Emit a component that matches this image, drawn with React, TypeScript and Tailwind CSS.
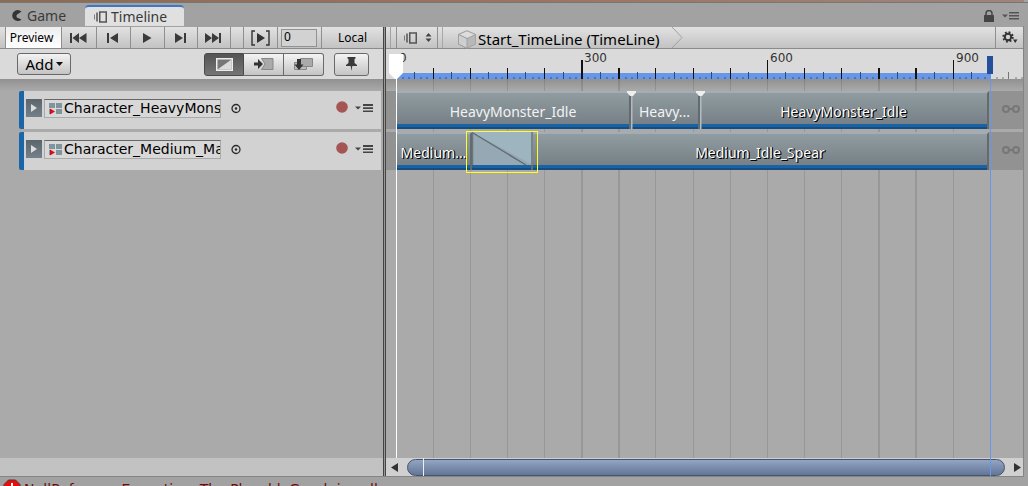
import React from "react";

const START = 10;
const VIEW = 637;
const PX_PER_FRAME = 185.7 / 300;
const END_FRAME = 960;

const pct = (px: number) => `${(px / VIEW) * 100}%`;
const at = (frame: number) => pct(START + Math.floor(frame * PX_PER_FRAME));

const bar = "bg-linear-to-b from-[#e2e2e2] to-[#c2c2c2]";
const pill =
  "flex items-center justify-center border border-[#6a6a6a] bg-linear-to-b from-[#f4f4f4] to-[#c4c4c4]";
const wideFont = "font-['DejaVu_Sans',sans-serif]";

function ToolButton({ label, className, children }: { label: string; className: string; children?: React.ReactNode }) {
  return (
    <button aria-label={label} className={`flex h-full shrink-0 items-center justify-center border-r border-[#8f8f8f] ${className}`}>
      {children}
    </button>
  );
}

function Media({ d, lines = [] }: { d: string; lines?: number[] }) {
  return (
    <svg width="20" height="12" viewBox="0 0 20 12" fill="#3a3a3a">
      <path d={d} />
      {lines.map((x) => (
        <rect key={x} x={x} y="1" width="2" height="10" />
      ))}
    </svg>
  );
}

function MenuIcon({ bold = false }: { bold?: boolean }) {
  return (
    <svg width="18" height="10" viewBox="0 0 18 10" fill={bold ? "#444" : "#555"}>
      <path d="M0 3.5h6L3 6.500z" />
      <path d={bold ? "M8 1h10v2H8zM8 4.300h10v1.700H8zM8 7.500h10v1.500H8z" : "M7 1h10v1.500H7zM7 4h10v1.500H7zM7 7h10v1.500H7z"} />
    </svg>
  );
}

function TimelineIcon() {
  return (
    <svg width="16" height="12" viewBox="0 0 16 12" fill="none" stroke="#555">
      <path d="M1.500 3.500v5" opacity=".7" />
      <path d="M4 1.500v9" strokeWidth="1.500" />
      <rect x="6.750" y="1" width="6.500" height="10" strokeWidth="1.500" />
    </svg>
  );
}

function TabBar() {
  return (
    <div className="flex h-6 shrink-0 items-end border-t border-[#777] bg-[#a2a2a2] pl-1 text-[14px] text-[#3a3a3a]">
      <button className="flex h-[21px] w-20 items-center gap-1 pl-1.5">
        <svg width="13" height="12" viewBox="0 0 13 12" fill="#333">
          <path d="M11.500 1.500A5.500 5.500 0 1 0 11.500 9.500L8 8C6 8 6 4 8 4z" />
        </svg>
        Game
      </button>
      <button className="ml-px flex h-[21px] w-[99px] items-center gap-0.5 rounded-t-sm border-t-2 border-[#3b79c8] bg-[#e0e0e0] pl-2">
        <TimelineIcon />
        Timeline
      </button>
      <div className="ml-auto flex h-5 items-center gap-2 pr-2">
        <button aria-label="Lock">
          <svg width="10" height="12" viewBox="0 0 10 12" fill="#444">
            <rect x="0" y="5" width="10" height="7" rx=".5" />
            <path d="M2 6V3.500a3 3 0 0 1 6 0V6" fill="none" stroke="#444" strokeWidth="1.500" />
          </svg>
        </button>
        <button aria-label="Window menu">
          <MenuIcon />
        </button>
      </div>
    </div>
  );
}

function Transport() {
  return (
    <div className={`flex h-[22px] shrink-0 border-b border-[#8b8b8b] ${bar}`}>
      <div className="w-1.5 border-r border-[#8f8f8f]" />
      <button className="w-14 shrink-0 border-r border-[#8f8f8f] bg-linear-to-b from-[#eee] to-white pr-1 text-[12px] text-black">Preview</button>
      <ToolButton label="Go to start" className="w-[35px]">
        <Media d="M10 1v10L3.500 6zM17.500 1v10L10 6z" lines={[1]} />
      </ToolButton>
      <ToolButton label="Previous frame" className="w-[34px]">
        <Media d="M14 1v10L6 6z" lines={[3]} />
      </ToolButton>
      <ToolButton label="Play" className="w-[34px]">
        <Media d="M5 1v10L13.500 6z" />
      </ToolButton>
      <ToolButton label="Next frame" className="w-[33px]">
        <Media d="M4 1v10L12 6z" lines={[13]} />
      </ToolButton>
      <ToolButton label="Go to end" className="w-[33px]">
        <Media d="M1 1v10L8 6zM8 1v10L15 6z" lines={[15]} />
      </ToolButton>
      <div className="w-[13px] border-r border-[#8f8f8f]" />
      <ToolButton label="Play range" className="w-[34px]">
        <svg width="20" height="16" viewBox="0 0 20 16" fill="#333">
          <path d="M6 3v10l8-5z" />
          <path d="M4 1H1v14h3M15 1h3v14h-3" fill="none" stroke="#333" strokeWidth="1.400" />
        </svg>
      </ToolButton>
      <div className="flex w-11 items-center border-r border-[#8f8f8f] pl-[3px]">
        <input aria-label="Current frame" defaultValue="0" className="h-[18px] w-9 border border-[#929292] bg-[#d2d2d2] px-0.5 pb-0.5 text-[12px] text-black outline-none" />
      </div>
      <button className="flex-1 text-[12px] text-black">Local</button>
    </div>
  );
}

function TrackTools() {
  return (
    <div className="flex h-[30px] shrink-0 items-center bg-[#dadada] pr-3.5 pl-[17px]">
      <button className={`${pill} h-[22px] w-[54px] gap-0.5 rounded-[3px] text-[15px] text-black`}>
        Add
        <svg width="7" height="4" viewBox="0 0 7 4" fill="#111">
          <path d="M0 0h7L3.500 4z" />
        </svg>
      </button>
      <div className="ml-auto flex h-[23px]">
        <button aria-label="Mix mode" className="flex w-10 items-center justify-center rounded-l-[3px] border border-[#4a4a4a] bg-linear-to-b from-[#555] to-[#757575]">
          <svg width="17" height="13" viewBox="0 0 17 13">
            <rect x=".75" y=".75" width="15.500" height="11.500" fill="#777" stroke="#eee" strokeWidth="1.500" />
            <path d="M15.500 1.500v10H1.500z" fill="#dcdcdc" />
          </svg>
        </button>
        <button aria-label="Ripple mode" className={`${pill} w-10 border-l-0`}>
          <svg width="22" height="14" viewBox="0 0 22 14">
            <path d="M8.500 1.500H20v11H8.500L12 7z" fill="#aaa" stroke="#888" />
            <path d="M1 5.500h4V2l5 5-5 5V8.500H1z" fill="#333" />
          </svg>
        </button>
        <button aria-label="Replace mode" className={`${pill} w-10 rounded-r-[3px] border-l-0`}>
          <svg width="21" height="14" viewBox="0 0 21 14">
            <path d="M1.500 5.500h12v7h-12z" fill="#bbb" stroke="#888" />
            <path d="M7.500 1.500h12v8h-12z" fill="#aaa" stroke="#888" />
            <path d="M4 2h4v5.500h2.500L6 13 1.500 7.500H4z" fill="#333" />
          </svg>
        </button>
      </div>
      <button aria-label="Pin" className={`${pill} ml-2.5 h-[23px] w-[35px] rounded-[3px]`}>
        <svg width="11" height="14" viewBox="0 0 11 14" fill="#3a3a3a">
          <path d="M1.500 0h8v1.500L8.500 2v4l2.500 2v1H6.300L5.500 14 4.700 9H0V8l2.500-2V2l-1-.5z" />
        </svg>
      </button>
    </div>
  );
}

function TrackHeader({ name }: { name: string }) {
  return (
    <div className="mr-0.5 ml-[19px] flex h-[38px] items-start rounded-l-[2px] border-l-[5px] border-[#1a66a8] bg-[#d2d2d2] pt-2 pl-0.5">
      <button aria-label="Expand track" className="flex h-[18px] w-4 items-center justify-center bg-linear-to-b from-[#5b666c] to-[#74808a]">
        <svg width="6" height="8" viewBox="0 0 6 8" fill="#ddd">
          <path d="M0 0v8l6-4z" />
        </svg>
      </button>
      <button className={`ml-0.5 flex h-[19px] w-[177px] items-center gap-0.5 overflow-hidden border border-[#aaa] border-t-[#666] bg-[#d8d8d8] pl-1 text-[14px] whitespace-nowrap text-black ${wideFont}`}>
        <svg className="shrink-0" width="13" height="13" viewBox="0 0 13 13">
          <path d="M0 1h6v5H0zM7 1h6v5H7zM7 7h6v5H7z" fill="#7f949d" />
          <path d="M0 7h2v5H0z" fill="#7f949d" />
          <path d="M1 6.500v6L6 9.500z" fill="#d80c18" />
        </svg>
        <span>{name}</span>
      </button>
      <button aria-label="Pick object" className="mt-1 ml-2.5">
        <svg width="10" height="11" viewBox="0 0 10 11">
          <circle cx="5" cy="5.500" r="4" fill="none" stroke="#2a2a2a" strokeWidth="1.300" />
          <circle cx="5" cy="5.500" r="1.200" fill="#2a2a2a" />
        </svg>
      </button>
      <button aria-label="Record" className="mt-0.5 ml-auto">
        <svg width="12" height="12" viewBox="0 0 12 12">
          <circle cx="6" cy="6" r="5.800" fill="#a55553" />
        </svg>
      </button>
      <button aria-label="Track menu" className="mt-1 mr-2 ml-[7px]">
        <MenuIcon bold />
      </button>
    </div>
  );
}

function Breadcrumbs() {
  return (
    <div className={`flex h-[22px] shrink-0 border-b border-[#8b8b8b] ${bar}`}>
      <div className="w-[5px] border-r border-[#a2a2a2]" />
      <div className="w-1.5 border-r border-[#8f8f8f]" />
      <ToolButton label="Select timeline" className="w-[41px] gap-1.5">
        <TimelineIcon />
        <svg width="7" height="9" viewBox="0 0 7 9" fill="#444">
          <path d="M.5 3.500L3.500 0l3 3.500zM.5 5.500L3.500 9l3-3.500z" />
        </svg>
      </ToolButton>
      <div className="w-[5px] border-r border-[#a8a8a8]" />
      <a href="#timeline" className="flex items-center pt-1 pl-3.5 text-[15px] text-black">
        <svg className="shrink-0" width="20" height="19" viewBox="0 0 20 19" stroke="#999" strokeWidth=".8">
          <path d="M10 .8l8.500 3.700v9.500L10 18.300 1.500 14V4.500z" fill="#b8b8b8" />
          <path d="M10 .8l8.500 3.700L10 8.500 1.500 4.500z" fill="#ddd" />
          <path d="M1.500 4.500L10 8.500v9.800L1.500 14z" fill="#cfcfcf" />
        </svg>
        <span className="ml-px whitespace-nowrap">Start_TimeLine (TimeLine)</span>
      </a>
      <svg className="ml-2.5 shrink-0" width="14" height="21" viewBox="0 0 14 21" fill="none" stroke="#a0a0a0">
        <path d="M2 0l10 10.500L2 21" />
      </svg>
      <button aria-label="Timeline settings" className="ml-auto flex w-7 items-center justify-center border-l border-[#8f8f8f]">
        <svg width="16" height="14" viewBox="0 0 16 14">
          <circle cx="6" cy="6" r="3.200" fill="none" stroke="#333" strokeWidth="2" />
          <circle cx="6" cy="6" r="4.800" fill="none" stroke="#333" strokeWidth="1.800" strokeDasharray="1.900 1.870" />
          <path d="M11 8.500h4.500L13.200 12z" fill="#333" />
        </svg>
      </button>
    </div>
  );
}

const WIDE_LINES = [300, 360, 780, 840];

function Ruler() {
  const ticks: React.ReactNode[] = [];
  for (let f = 10; f <= 1010; f += 10) {
    const past = f > END_FRAME;
    const major = f % 300 === 0;
    const large = f % 60 === 0;
    const medium = f % 30 === 0;
    const top = major ? 11 : large ? 19 : medium ? 23 : 28;
    ticks.push(
      <rect
        key={f}
        x={at(f)}
        y={top}
        width={WIDE_LINES.includes(f) || !medium ? 2 : 1}
        height={30 - top}
        fill={past ? (medium ? "#777" : "#aaa") : large ? "#111" : medium ? "#2f4a7c" : "#4a74bd"}
      />,
    );
  }
  return (
    <div className={`relative h-[30px] shrink-0 bg-[#dadada] text-[12px] text-[#333] ${wideFont}`}>
      <svg className="absolute inset-0 h-full w-full" shapeRendering="crispEdges">
        <rect x={at(0)} y="24" width={pct(594)} height="6" fill="#6797e8" />
        {ticks}
      </svg>
      {[0, 300, 600, 900].map((f) => (
        <span key={f} className="absolute top-0 pl-[3px] leading-[18px]" style={{ left: at(f) }}>
          {f}
        </span>
      ))}
    </div>
  );
}

function GridLines() {
  const lines: React.ReactNode[] = [];
  for (let f = 60; f < END_FRAME; f += 60) {
    lines.push(<rect key={f} x={at(f)} y="0" width={WIDE_LINES.includes(f) ? 2 : 1} height="100%" fill="#979797" />);
  }
  return (
    <svg className="absolute inset-0 h-full w-full" shapeRendering="crispEdges">
      {lines}
    </svg>
  );
}

type ClipData = { name: string; width: number; bright?: boolean };

function Clip({ clip }: { clip: ClipData }) {
  return (
    <div
      className="relative flex h-full shrink-0 items-center justify-center overflow-hidden border-t-2 border-r-2 border-t-[#a4adb4] border-r-[#626b70] bg-linear-to-b from-[#919ca1] to-[#727c82]"
      style={{ width: pct(clip.width) }}
    >
      <span className={`whitespace-nowrap text-[14px] text-white ${clip.bright ? "[text-shadow:1px_1px_0_#000,1px_0_0_#000]" : "opacity-90"}`}>
        {clip.name}
      </span>
      <div className="absolute inset-x-0 bottom-0 h-[5px] border-b-2 border-[#164d80] bg-[#1962a4]" />
    </div>
  );
}

function Lane({ clips }: { clips: ClipData[] }) {
  return (
    <div className="relative flex h-[38px] bg-[#929292]">
      <div className="shrink-0" style={{ width: pct(START + 1) }} />
      {clips.map((c, i) => (
        <Clip key={i} clip={c} />
      ))}
      <svg className="absolute top-[13px] right-[3px] h-2.5 w-[18px]" viewBox="0 0 18 10" fill="none" stroke="#777" strokeWidth="2">
        <circle cx="4" cy="5" r="3" />
        <circle cx="14" cy="5" r="3" />
        <path d="M7 5h4" />
      </svg>
    </div>
  );
}

function Lanes() {
  return (
    <div className="relative flex-1 overflow-hidden bg-[#aaaaaa]">
      <GridLines />
      <div className="relative h-3 bg-linear-to-b from-black/15 to-transparent" />
      <div className="relative flex flex-col gap-[3px]">
        <Lane
          clips={[
            { name: "HeavyMonster_Idle", width: 234 },
            { name: "Heavy...", width: 69 },
            { name: "HeavyMonster_Idle", width: 289, bright: true },
          ]}
        />
        <Lane
          clips={[
            { name: "Medium...", width: 75, bright: true },
            { name: "", width: 61 },
            { name: "Medium_Idle_Spear", width: 456, bright: true },
          ]}
        />
      </div>
      {[380, 492].map((f) => (
        <svg key={f} className="absolute top-3 -ml-1 h-[38px] w-[9px]" style={{ left: at(f) }} viewBox="0 0 9 38">
          <path d="M4 3h1.500v35H4z" fill="#b4bbbf" />
          <path d="M0 0h9v1.500L6 5H3L0 1.500z" fill="#eee" />
        </svg>
      ))}
      <button
        aria-label="Clip blend"
        className="absolute top-[52px] h-[42px] border border-[#ffff20]"
        style={{ left: pct(80), width: pct(72) }}
      >
        <svg className="absolute top-0 left-[5px] h-[33px] w-[61px]" viewBox="0 0 61 33" preserveAspectRatio="none">
          <rect width="61" height="33" fill="#95a8b3" />
          <path d="M0 0h61v33z" fill="#a3bac6" opacity=".7" />
          <path d="M1 1L54 33" stroke="#606b70" strokeWidth="1.300" />
          <path d="M.5 0v33M60 0v33" stroke="#6b7478" strokeWidth="1.500" />
        </svg>
      </button>
      <div className="absolute inset-y-0 w-px bg-white" style={{ left: at(0) }} />
    </div>
  );
}

function Scrollbar() {
  return (
    <div className="flex h-[18px] shrink-0 items-center bg-[#d0d0d0]">
      <button aria-label="Scroll left" className="flex w-[21px] justify-center pr-1">
        <svg width="7" height="9" viewBox="0 0 7 9" fill="#333">
          <path d="M7 0v9L0 4.500z" />
        </svg>
      </button>
      <div role="scrollbar" aria-controls="lanes" aria-valuenow={0} className="h-[17px] flex-1 rounded-full border border-[#44536e] bg-linear-to-b from-[#93a5c3] to-[#647697]" />
      <button aria-label="Scroll right" className="flex w-[18px] justify-center pl-1.5">
        <svg width="7" height="9" viewBox="0 0 7 9" fill="#333">
          <path d="M0 0v9l7-4.500z" />
        </svg>
      </button>
    </div>
  );
}

export default function App() {
  return (
    <div className="flex h-screen min-h-80 w-full flex-col overflow-hidden bg-[#a2a2a2] font-['Noto_Sans','DejaVu_Sans',sans-serif]">
      <div className="mr-1 h-0.5 shrink-0 bg-linear-to-r from-[#8a6b54] via-[#9b7460] to-[#a08478]" />
      <TabBar />
      <main className="mr-1 flex min-h-0 flex-1 border-r border-b border-[#858585] pt-px">
        <section aria-label="Tracks" className="flex w-[383px] shrink-0 flex-col">
          <Transport />
          <TrackTools />
          <div className="flex flex-1 flex-col bg-[#aaaaaa]">
            <div className="h-3 bg-linear-to-b from-black/15 to-transparent" />
            <div className="flex flex-col gap-[3px]">
              <TrackHeader name="Character_HeavyMons" />
              <TrackHeader name="Character_Medium_Ma" />
            </div>
          </div>
          <div className="h-[18px] bg-[#c2c2c2]" />
        </section>
        <div className="w-[3px] shrink-0 border-x border-[#444] bg-[#999]" />
        <section id="lanes" aria-label="Timeline" className="relative flex min-w-0 flex-1 flex-col">
          <Breadcrumbs />
          <Ruler />
          <Lanes />
          <Scrollbar />
          <svg className="absolute top-[27px] -ml-[7px]" style={{ left: at(0) }} width="14" height="25" viewBox="0 0 14 25" fill="#fff">
            <path d="M0 0h14v19l-6 6H6l-6-6z" />
          </svg>
          <div className="absolute top-[29px] bottom-0 -ml-[3px] flex w-1.5 flex-col" style={{ left: at(END_FRAME) }}>
            <div className="h-[18px] bg-[#244f9a]" />
            <div className="mx-auto w-px flex-1 bg-[#6797e8]" />
          </div>
          <div className="absolute bottom-0 left-[37px] h-[18px] w-px bg-[#eee]" />
        </section>
      </main>
      <footer className={`flex h-[9px] shrink-0 items-start gap-[3px] overflow-hidden pl-[3px] text-[14px] leading-4 text-[#6d0a0a] ${wideFont}`}>
        <svg className="mt-0.5 shrink-0" width="18" height="18" viewBox="0 0 18 18">
          <path d="M5.500 1h7L17 5.500v7L12.500 17h-7L1 12.500v-7z" fill="#e80d0d" stroke="#5c3030" />
          <path d="M8 4h2v7H8zM8 12h2v2H8z" fill="#fff" />
        </svg>
        <span className="pt-1 whitespace-nowrap">NullReferenceException: The PlayableGraph is null</span>
      </footer>
    </div>
  );
}
